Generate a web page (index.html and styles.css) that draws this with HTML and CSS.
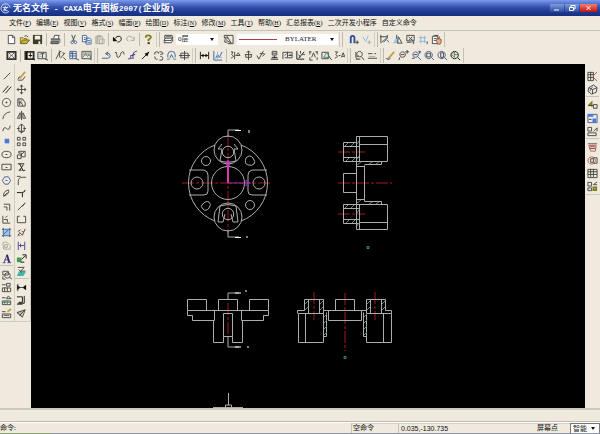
FILE: index.html
```
<!DOCTYPE html>
<html lang="zh-CN">
<head>
<meta charset="utf-8">
<title>无名文件 - CAXA电子图板2007(企业版)</title>
<link rel="stylesheet" href="styles.css">
</head>
<body>
<header class="titlebar">
  <svg class="app-logo" viewBox="0 0 12 12"><path d="M10 9A5 5 0 1 1 11 5M3 5h6M6 3l-2 6M4 7l5 2M8 4L5 9"/></svg>
  <h1>无名文件<span> - CAXA</span>电子图板<span>2007(</span>企业版<span>)</span></h1>
  <div class="window-buttons">
    <button aria-label="最小化"><svg viewBox="0 0 14 8"><path d="M4 6h5"/></svg></button>
    <button aria-label="还原"><svg viewBox="0 0 14 8"><path d="M6 3V1.500h4V5H9M4.500 3.500h4v3h-4z"/></svg></button>
    <button class="close" aria-label="关闭"><svg viewBox="0 0 16 8"><path d="M6 2l4 4M10 2L6 6"/></svg></button>
  </div>
</header>

<nav class="menu">
  <a href="#">文件(<u>F</u>)</a><a href="#">编辑(<u>E</u>)</a><a href="#">视图(<u>V</u>)</a><a href="#">格式(<u>S</u>)</a><a href="#">幅面(<u>P</u>)</a><a href="#">绘图(<u>D</u>)</a><a href="#">标注(<u>N</u>)</a><a href="#">修改(<u>M</u>)</a><a href="#">工具(<u>T</u>)</a><a href="#">帮助(<u>H</u>)</a><a href="#">汇总报表(<u>R</u>)</a><a href="#">二次开发小程序</a><a href="#">自定义命令</a>
</nav>

<div class="toolbar">
  <button aria-label="新建"><svg viewBox="0 0 12 12"><path class="w" d="M2.500 1.500h5l2 2v7h-7z"/><path d="M7 2v2h2"/></svg></button>
  <button aria-label="打开"><svg viewBox="0 0 12 12"><path class="y" d="M1.500 10V4h3l1 1h3v2"/><path class="yf" d="M1.500 10.500L4 6.500h7.500l-3 4z"/><path d="M6 2.500q2-2 4 1"/></svg></button>
  <button aria-label="保存"><svg viewBox="0 0 12 12"><path class="of" d="M1 1h10v10H1z"/><path class="wf" d="M3 2h6v4H3zM7 8h2v3H7z"/></svg></button>
  <i class="sep"></i>
  <button aria-label="打印"><svg viewBox="0 0 12 12"><path class="w" d="M4 5l1-3.500h5L9 5"/><path class="gf" d="M1 5h9l1.500 1v3L9 11H1z"/><path d="M1 5.500h10M1 8.500h8v2H1z"/></svg></button>
  <i class="sep"></i>
  <button aria-label="剪切"><svg viewBox="0 0 12 12"><path d="M4 1l3 7M8 1L5 8"/><path class="b" d="M4.500 7.500a1.500 1.500 0 1 0 .1 0M8 7.500a1.500 1.500 0 1 0 .1 0"/></svg></button>
  <button aria-label="复制"><svg viewBox="0 0 12 12"><path class="b w" d="M1.500 1.500h4l1 1v6h-5zM5.500 4.500h4l1.500 1.500v5H5.500z"/><path class="b" d="M3 4h2M3 6h2M7 7h3M7 9h3"/></svg></button>
  <button aria-label="粘贴"><svg viewBox="0 0 12 12"><path class="t" d="M2 2.500h7v8H2zM4 1.500h3v2H4zM6 5.500h5v5H6z"/><path class="tf" d="M2 3h3v7H2z"/></svg></button>
  <i class="sep"></i>
  <button aria-label="撤销"><svg viewBox="0 0 12 12"><path class="k" d="M2 6Q7 0 10 4Q11 8 6 9"/><path class="kf" d="M1 3v5h5z"/></svg></button>
  <button aria-label="重做"><svg viewBox="0 0 12 12"><path class="t" d="M10 6Q5 0 2 4Q1 7 4 8M10 3v4H6"/></svg></button>
  <i class="sep"></i>
  <button aria-label="帮助"><svg viewBox="0 0 12 12"><path class="ok" d="M3 4Q3 1 6 1.500Q9 2 8.500 4Q8 5 6 6v2"/><path class="of" d="M5 9h2.500v2H5z"/></svg></button>
  <i class="grip"></i>
  <button aria-label="层控制"><svg viewBox="0 0 12 12"><path class="w" d="M3 6.500l-2 3h8l2-3z"/><path class="w" d="M3 4l-2 3h8l2-3z"/><path class="w" d="M2 1.500h8v3H2z"/><path d="M3 3h6"/></svg></button>
  <span class="combo layer"><select aria-label="当前层"><option>0层</option></select></span>
  <button class="pen" aria-label="颜色"><svg viewBox="0 0 12 12"><path d="M1 1.500h10v9H5M1 3l5 2 3 5-5-3zM6 5L4 2M2 6v3h3"/></svg></button>
  <span class="combo linetype"><select aria-label="线型"><option>BYLAYER</option><option selected>BYLATER</option></select></span>
  <i class="grip wide"></i>
  <button aria-label="捕捉"><svg viewBox="0 0 12 12"><path class="b thick" d="M3 10V4Q3 2 5 2T7 4v6"/><path d="M8 9h4M10 7v4"/></svg></button>
  <button aria-label="捕捉点"><svg viewBox="0 0 12 12"><path class="l" d="M2 3l3 5 3-6"/><path class="t" d="M7 9h4M9 7v4"/></svg></button>
  <i class="grip short"></i>
  <button aria-label="导航"><svg viewBox="0 0 12 12"><path d="M2 1v9M1 3h8M9 1v4M3 9l6-5"/><path class="b" d="M5 9l3-3 3 3"/></svg></button>
  <button aria-label="三视图"><svg viewBox="0 0 12 12"><path class="lf" d="M6 2L1 10h6z"/><path d="M7 3l4 7H6zM5 1v4"/></svg></button>
  <button aria-label="查询"><svg viewBox="0 0 12 12"><path d="M2 1.500h8v6H2zM4 3l4 4M8 3L4 7M2 9h5M9 8v3"/><path class="b" d="M7 5l3 5"/></svg></button>
  <button aria-label="栅格"><svg viewBox="0 0 12 12"><path class="l" d="M1 4h8M1 8h8M3 2v8M7 2v8"/><path d="M10 8v3"/></svg></button>
  <button aria-label="平移"><svg viewBox="0 0 12 12"><path class="w" d="M1.500 2.500h6v8h-6zM3 1.500h5M3 5h3M3 7h3"/><path class="hand" d="M6 7l1-3 1 2 1-3 1 3h1v3l-1 2H7z"/></svg></button>
  <i class="end"></i>
</div>

<div class="toolbar">
  <button aria-label="图幅"><svg viewBox="0 0 12 12"><path class="thick" d="M1.500 2h9v8h-9z"/><path d="M3 3l2 2M9 3L7 5M3 9l2-2M9 9L7 7M5 6h2"/></svg></button>
  <i class="sep"></i>
  <button aria-label="图框"><svg viewBox="0 0 12 12"><path class="thick" d="M1.500 2h9v8h-9z"/><path class="kf" d="M2 2h2v8H2z"/><path class="k" d="M7 3v5M5 6h4M9 9l3 2"/></svg></button>
  <button aria-label="标题栏"><svg viewBox="0 0 12 12"><path d="M1 2.500h9v7H1z"/><path class="l" d="M2 5h3M2 7h3"/><path d="M4 4h4M6 4v5M9 10l3 1"/></svg></button>
  <i class="sep"></i>
  <button aria-label="零件序号"><svg viewBox="0 0 12 12"><path d="M1 10L5 2v6M4 1l3 1M6 9l4-5M8 3l3 1M9 8l3 3"/></svg></button>
  <button aria-label="明细表"><svg viewBox="0 0 12 12"><path class="b" d="M2 1.500h7v8H2zM2 4h7M2 6.500h7M5 2v7"/><path d="M8 9l4 2M3 3h1"/></svg></button>
  <button aria-label="背景"><svg viewBox="0 0 12 12"><path d="M1 1.500h10v8H1z"/><path class="tf" d="M2 2h8v4H2z"/><path class="g" d="M2 8l3-4 2 3 2-2 2 4M8 9l4 2"/></svg></button>
  <i class="grip"></i>
  <button aria-label="轴线"><svg viewBox="0 0 12 12"><path class="b" d="M1 9h6q3 0 3-3T6 4"/><path d="M8 2L5 4l3 2"/></svg></button>
  <button aria-label="波浪线"><svg viewBox="0 0 12 12"><path d="M1 3q2-2 2 2t2 3 2-3 2-3 2 3"/></svg></button>
  <button aria-label="双折线"><svg viewBox="0 0 12 12"><path class="v" d="M1 10l3-1V6h3V3l4-2M4 9h3L6 5h3"/></svg></button>
  <button aria-label="箭头"><svg viewBox="0 0 12 12"><path class="k" d="M2 10l8-8"/><path class="kf" d="M10 2L5 4l3 3z"/></svg></button>
  <button aria-label="齿轮"><svg viewBox="0 0 12 12"><path d="M2 5q-1-3 2-3t2 2M7 2q3-1 4 2L8 5M2 7q0 4 3 3M8 7q4 0 2 4H7"/></svg></button>
  <button aria-label="圆弧拟合"><svg viewBox="0 0 12 12"><path class="b" d="M2 8V5q0-3.500 4-3.500T10 5v3M4 9l2-4 2 4"/><path class="g" d="M1 10h3M8 10h3"/></svg></button>
  <button aria-label="孔轴"><svg viewBox="0 0 12 12"><path d="M2 3.500h8v5H2zM6 1v10M0 6h12"/></svg></button>
  <i class="grip"></i>
  <button aria-label="尺寸标注"><svg viewBox="0 0 12 12"><path class="k" d="M1.500 2v8M10.500 2v8M2 6h8"/><path class="kf" d="M2 6l3-2v4zM10 6L7 4v4z"/></svg></button>
  <button aria-label="坐标标注"><svg viewBox="0 0 12 12"><path class="b" d="M2 1v10h9M4 9l2-4 2 3 3-6"/><path class="l" d="M3 8h8M6 2v8"/></svg></button>
  <i class="sep"></i>
  <button aria-label="倒角标注"><svg viewBox="0 0 12 12"><path d="M1 2h2L2 5l2 2-3 2M5 2v8M6 6h5L9 3 7 6"/></svg></button>
  <button aria-label="引出说明"><svg viewBox="0 0 12 12"><path d="M6 1v10M2 5h8M4 3l2-2 2 2M3 5v3h6V5"/></svg></button>
  <button aria-label="粗糙度"><svg viewBox="0 0 12 12"><path d="M1 6l2 4 5-9M4 4h5M7 7l3-3"/></svg></button>
  <button aria-label="基准代号"><svg viewBox="0 0 12 12"><path d="M3.500 1.500h5v4h-5zM6 6v3M4 3.500h4"/><path class="k" d="M2 10h8M3 8h6"/></svg></button>
  <button aria-label="形位公差"><svg viewBox="0 0 12 12"><path d="M1 10V2.500h10v6H3M6 2v6M3 6l2-2M8 4l2 2M7 6h4"/></svg></button>
  <button aria-label="焊接符号"><svg viewBox="0 0 12 12"><path class="k" d="M2 1v9h8M4 9l6-7"/><path d="M4 5l2 3M8 5h3M6 1v3"/></svg></button>
  <button aria-label="剖切符号"><svg viewBox="0 0 12 12"><path d="M1 2h3M8 2h3M2 2v3M10 2v3M4 8l2-5 2 5M2 8v3h3M10 8v3"/></svg></button>
  <button aria-label="局部放大"><svg viewBox="0 0 12 12"><path d="M1 2.500h7v7H1zM9 8l3 3"/><path class="g" d="M3 8l3-5 4 5z"/></svg></button>
  <button aria-label="尺寸驱动"><svg viewBox="0 0 12 12"><path d="M1 2h3L2 5l2 2-3 2M5 6h2M8 8l2-5 2 5M9 7h2"/></svg></button>
  <i class="grip"></i>
  <button aria-label="格式刷"><svg viewBox="0 0 12 12"><path class="r" d="M2 9l3 1"/><path d="M6 1.500a3 3 0 1 0 .1 0M2 2v6l3-2M8 7l3 4M2 10h5"/></svg></button>
  <button aria-label="线宽"><svg viewBox="0 0 12 12"><path d="M1 4h5M8 4h2M1 9h10"/><path class="t" d="M2 7h7"/></svg></button>
  <i class="grip short"></i>
  <button aria-label="重画"><svg viewBox="0 0 12 12"><path class="yk" d="M3 10l7-8"/><path class="b" d="M1 9q3 3 5 0"/></svg></button>
  <button aria-label="动态缩放"><svg viewBox="0 0 12 12"><path d="M5 2a3 3 0 1 0 .1 0M2 8l-1 3M8 2h4M10 0v4M3 5h4"/></svg></button>
  <button aria-label="放大"><svg viewBox="0 0 12 12"><path class="b" d="M5 2a3 3 0 1 0 .1 0M7 7l4 4"/><path d="M8 2h3M9.500 1v3M3 5h4M1 9h3"/></svg></button>
  <button aria-label="窗口缩放"><svg viewBox="0 0 12 12"><path class="b" d="M5 1.500a4 4 0 1 0 .1 0M8 8l3 3"/><path d="M3 3.500h4v4H3z"/></svg></button>
  <button aria-label="显示全部"><svg viewBox="0 0 12 12"><path class="b" d="M5 1.500a4 4 0 1 0 .1 0M8 8l3 3"/><path d="M4 3h3v5H4z"/></svg></button>
  <button aria-label="显示回溯"><svg viewBox="0 0 12 12"><path class="k" d="M5 1.500a4 4 0 1 0 .1 0M8 8l3 3"/><path class="g" d="M2 5l3-3v6zM5 5h4"/></svg></button>
  <i class="end"></i>
</div>

<div class="workspace">
  <div class="rail">
    <button aria-label="直线"><svg viewBox="0 0 12 12"><path d="M3 9l7-7"/></svg></button>
    <button aria-label="平行线"><svg viewBox="0 0 12 12"><path class="k" d="M2 9l6-7M5 10l6-7"/></svg></button>
    <button aria-label="圆"><svg viewBox="0 0 12 12"><path d="M6 1.500a4.500 4.500 0 1 0 .1 0M5 6h2M6 5v2"/></svg></button>
    <button aria-label="圆弧"><svg viewBox="0 0 12 12"><path d="M2 10Q3 3 10 2"/></svg></button>
    <button aria-label="样条"><svg viewBox="0 0 12 12"><path d="M2 9q1-6 4-3t4-3"/></svg></button>
    <button aria-label="点"><svg viewBox="0 0 12 12"><path class="bf" d="M4 3h5v5H4z"/></svg></button>
    <button aria-label="椭圆"><svg viewBox="0 0 12 12"><ellipse cx="6" cy="6" rx="5" ry="3.500"/><path d="M5 6h2"/></svg></button>
    <button aria-label="矩形"><svg viewBox="0 0 12 12"><path d="M1 2.500h10v6H1zM5 6h2"/></svg></button>
    <button aria-label="正多边形"><svg viewBox="0 0 12 12"><path class="b" d="M4 2h4l2.500 4L8 10H4L1.500 6z"/><path d="M5 6h2"/></svg></button>
    <button aria-label="中心线"><svg viewBox="0 0 12 12"><path d="M3 9q-1-5 5-7 2 4-5 7zM3 9l4-4"/></svg></button>
    <button aria-label="等距线"><svg viewBox="0 0 12 12"><path d="M3 3.500h6.500v7M3 6.500h3.500v4"/></svg></button>
    <button aria-label="公式曲线"><svg viewBox="0 0 12 12"><path d="M2 2v8h8M3 6h4v3M5 4l2-2"/></svg></button>
    <button aria-label="剖面线"><svg viewBox="0 0 12 12"><path class="lf" d="M3 3h6v6H3z"/><path class="b" d="M1 2.500h10M1 9.500h10M2.500 1v10M9.500 1v10M3 8l5-5"/></svg></button>
    <button aria-label="填充"><svg viewBox="0 0 12 12"><path class="t" d="M2 3q3-2 5 0l3 3v4H3zM4 5h3v3H4z"/></svg></button>
    <button aria-label="文字"><svg viewBox="0 0 12 12"><path class="v" d="M2 10.500h3M7 10.500h4M3.500 10L6.500 2M4 7.500h4"/><path class="vk" d="M6.500 2L9 10"/></svg></button>
    <i class="rule"></i>
    <button aria-label="块生成"><svg viewBox="0 0 12 12"><path d="M2 2.500h6v4H2zM7 4a3 3 0 1 0 .1 0M2 8v3h3M9 9l3 2"/></svg></button>
    <button aria-label="图符"><svg viewBox="0 0 12 12"><path d="M1 3h4M6 1.500h4v3H6zM1.500 6.500h9v4h-9zM4 6v4M7 6v4"/></svg></button>
    <button aria-label="定义图符"><svg viewBox="0 0 12 12"><path d="M1 3h4M6 4l2-3 3 3zM1.500 6.500h9v4h-9z"/><path class="g" d="M4 6v4M7 6v4M2 8h8"/></svg></button>
    <button aria-label="图库"><svg viewBox="0 0 12 12"><path d="M1 4h4M1.500 6.500h9v4h-9zM3 8h6"/><path class="yk" d="M7 4l4-3"/></svg></button>
  </div>
  <div class="rail modify">
    <button aria-label="删除"><svg viewBox="0 0 12 12"><path class="yk" d="M4 8l6-7"/><path d="M2 10h5l3-4M2 9l2-3"/></svg></button>
    <button aria-label="平移"><svg viewBox="0 0 12 12"><path d="M6 1v10M1 6h10M4.500 3L6 1l1.500 2M4.500 9L6 11l1.500-2M3 4.500L1 6l2 1.500M9 4.500L11 6 9 7.500"/></svg></button>
    <button aria-label="平移复制"><svg viewBox="0 0 12 12"><path class="tf" d="M2 2h5v5H2z"/><path d="M2 10V2h5l3 4v4zM4 9V5l3 3v2"/></svg></button>
    <button aria-label="镜像"><svg viewBox="0 0 12 12"><path d="M6 1v10M4.500 3v6h-3zM7.500 3v6h3z"/></svg></button>
    <button aria-label="旋转"><svg viewBox="0 0 12 12"><path d="M6 1v10M3 4l3-3 3 3v5H3zM1 6h3M8 6h3M4 9l2 2 2-2"/></svg></button>
    <button aria-label="阵列"><svg viewBox="0 0 12 12"><path d="M1.500 1.500h3v3h-3zM7.500 1.500h3v3h-3zM1.500 7.500h3v3h-3zM7.500 7.500h3v3h-3z"/></svg></button>
    <button aria-label="缩放"><svg viewBox="0 0 12 12"><path d="M3 2.500h7v6H6v-4H3zM1.500 6.500h4v4h-4zM6 6l3-3"/></svg></button>
    <button aria-label="裁剪"><svg viewBox="0 0 12 12"><path class="k" d="M2 2h7M4 2l4 8M8 3L4 9M3 9h3M8 9h2"/></svg></button>
    <button aria-label="过渡"><svg viewBox="0 0 12 12"><path d="M2.500 11V7q0-4.500 4.500-4.500h4M1 1.500h4"/></svg></button>
    <button aria-label="打断"><svg viewBox="0 0 12 12"><path class="k" d="M1 5h5q4 0 4-3M7 5v5"/></svg></button>
    <button aria-label="拉伸"><svg viewBox="0 0 12 12"><path d="M2 10l8-8M7 6l3-4"/></svg></button>
    <button aria-label="齐边"><svg viewBox="0 0 12 12"><path d="M4 2.500H1.500v7h9v-7H8"/></svg></button>
    <button aria-label="改变颜色"><svg viewBox="0 0 12 12"><path d="M2 10l2-4 3 3 3-7M2 5l3-2"/><path class="r" d="M6 5h3M3 8l2 2"/></svg></button>
    <button aria-label="标注编辑"><svg viewBox="0 0 12 12"><path class="v" d="M2.500 2v9M9.500 2v9M3 6h6M5 4v4"/></svg></button>
    <button aria-label="移动层"><svg viewBox="0 0 12 12"><path class="gf2" d="M1 5h5v5H1z"/><path class="k" d="M6 7l4-4M7 2h4v4M5 10h4"/></svg></button>
    <button aria-label="格式"><svg viewBox="0 0 12 12"><path class="cf" d="M3 6h8l-3 5H1z"/><path d="M2 1.500h7l-4 4h5M3 4l3 3"/></svg></button>
    <i class="rule"></i>
    <button aria-label="设备图"><svg viewBox="0 0 12 12"><path class="kf" d="M1 3l4 3-4 3zM11 3L7 6l4 3z"/><path d="M4 6h4M2 2v8"/></svg></button>
    <button aria-label="明细"><svg viewBox="0 0 12 12"><path class="k" d="M1 2h6v6H3M9 1v8H2M1 10h6"/></svg></button>
    <button aria-label="刷新"><svg viewBox="0 0 12 12"><path class="tf" d="M1 5l7-3-2 8z"/><path d="M1 5l9-3-3 8zM10 2L4 8"/></svg></button>
  </div>

  <main class="drawing">
    <svg viewBox="31 64 554 344" preserveAspectRatio="xMinYMin meet" role="img" aria-label="零件图">
      <g class="axis">
        <path d="M182 183h90M228 134v100M338 152h27M338 183h54M338 214h27M228 303v32M314 292v28M345 293v58M375 292v28"/>
      </g>
      <g class="line">
        <!-- flange, front view -->
        <path d="M241 145A40.500 40.500 0 0 1 241 221M215 145A40.500 40.500 0 0 0 215 221"/>
        <circle cx="228" cy="150" r="14"/><circle cx="228" cy="217" r="14"/>
        <circle cx="228" cy="183" r="16.500"/>
        <circle cx="197" cy="183" r="6"/><circle cx="259" cy="183" r="6"/>
        <circle cx="228" cy="152" r="5.700"/><circle cx="228" cy="214" r="5.700"/>
        <circle cx="206" cy="161" r="4.500"/><circle cx="250" cy="205" r="4.500"/>
        <path d="M246 158q4-4 7 0t1 6-6 1-2-7zM202 205q4-5 7-3t0 6-6 1-1-4z"/>
        <path d="M189 170h15q4 1 4 5v16q0 4-4 4h-15M267 170h-15q-4 1-4 5v16q0 4 4 4h15"/>
        <path d="M222 144l-4 5h4l-2 12q8 3 16 0l-2-12h4l-4-5M220 206q8-3 16 0l2 16h-5l-2-8M220 206l-2 16h5l2-8"/>
        <path d="M228 137v-7h11M228 230v7h11M228 300v-7h11M228 336v11h11"/>
        <!-- side section -->
        <path d="M356.500 136.500h31v25h-31zM359.500 136.500v25M359.500 144.500h28M343.500 142.500h13M343.500 142.500v19h16M343.500 146.500h16M343.500 157.500h16"/>
        <path d="M356.500 161.500v43M364.500 165.500v36M356.500 166.500h8M364.500 164.500h17v-3M356.500 199.500h8M364.500 201.500h17v3M343.500 173.500h13v19h-13z"/>
        <path d="M356.500 204.500h31v25h-31zM359.500 204.500v25M359.500 222.500h28M343.500 204.500h13M343.500 204.500v19h16M343.500 208.500h16M343.500 219.500h16"/>
        <!-- flange, bottom view -->
        <path d="M187.500 310.500v-11h19v11M218.500 310.500v-11h19v11M249.500 310.500v-11h19v11M187.500 310.500h81v5h-5v5h-22v-10M187.500 310.500v5h5v5h22v-10"/>
        <path d="M213.500 320.500v22h10v-29h9v29h10v-22M223.500 336.500h9"/>
        <!-- lengthwise section -->
        <path d="M298.500 313.500h25v29h-25zM305.500 313.500v29M297.500 313.500v-3h7v-11h19v14M308.500 299.500v14M319.500 299.500v14M323.500 310.500h43M328.500 310.500v10h33v-10M335.500 310.500v-11h19v11M323.500 336.500h3v-24M366.500 336.500h-3v-24"/>
        <path d="M366.500 313.500h25v29h-25zM383.500 313.500v29M366.500 313.500v-14h19v11h6v3M370.500 299.500v14M381.500 299.500v14"/>
        <path d="M228.500 393v12M225.500 408v-3h6v3M213 407.500h30"/>
      </g>
      <path class="hatch" d="M345 146l3-3M351 146l3-3M346 161l3-3M352 161l3-3M357 144l2-3M357 159l2-3M357 165l4-3M345 208l3-3M351 208l3-3M346 223l3-3M352 223l3-3M357 203l4-3M357 213l2-3M357 226l2-3M369 164l3-2M376 164l3-2M369 204l3-2M376 204l3-2M305 304l3-3M305 310l3-3M320 304l3-3M320 310l3-3M324 317l3-3M324 323l3-3M324 329l3-3M324 335l3-3M367 304l3-3M367 310l3-3M382 304l3-3M382 310l3-3M364 317l3-3M364 323l3-3M364 329l3-3M364 335l3-3"/>
      <path class="bold" d="M235 130.500h6M235 237.500h6M235 293h6M235 347h6M249 130v3M247 236v2M246 290v2M248 346v2"/>
      <path class="ucs" d="M228 183v-20"/>
      <path class="ucs-head" d="M226 165l2-5 2 5zM225 162h6"/>
      <path class="ucs-x" d="M228 183h22M246 180l4 3-4 3z"/>
      <path class="mark" d="M367 246.500h2v2h-2zM344 356.500h2v2h-2z"/>
    </svg>
  </main>

  <div class="rail right">
    <button aria-label="图纸"><svg viewBox="0 0 12 12"><path d="M1 1.500h6v9H1zM1 4h6M1 7h6M4 1v9"/><path class="r" d="M7 5l4-4M7 7l4 4"/></svg></button>
    <button aria-label="实体"><svg viewBox="0 0 12 12"><path d="M2 4l5-3 4 3-1 5-5 2-4-3zM2 4l4 2 5-2M6 6v5"/><path class="b" d="M3 8l3-5"/></svg></button>
    <i class="rule"></i>
    <button aria-label="关联"><svg viewBox="0 0 12 12"><path class="ok" d="M2 6l3-3v4"/><path d="M1 6h6M7 5h4v4H7z"/></svg></button>
    <button aria-label="窗口"><svg viewBox="0 0 12 12"><path class="b" d="M1 1.500h10v9H1z"/><path class="bf" d="M1 1h6v3H1zM6 6h4v4H6z"/><path d="M2 7h3"/></svg></button>
    <button aria-label="视图"><svg viewBox="0 0 12 12"><path d="M1 1.500h4v4H1zM1 7.500h9v3H1zM7 6l4-4v4"/></svg></button>
    <i class="rule"></i>
    <button aria-label="表格"><svg viewBox="0 0 12 12"><path class="r" d="M2 4h8l-1 6H4zM3 5h6"/><path d="M1 2h10M3 7h6"/></svg></button>
    <button aria-label="部件"><svg viewBox="0 0 12 12"><path class="r" d="M5 2a4 4 0 1 0 .1 0"/><path d="M4 4h3v4H4zM7 3h4v6H7"/></svg></button>
    <button aria-label="明细"><svg viewBox="0 0 12 12"><path d="M1 1.500h10v9H1zM1 4h10M1 7h10M4 1v9M7 1v9"/></svg></button>
    <button aria-label="参数"><svg viewBox="0 0 12 12"><path d="M1 1.500h4v4H1zM7 4l4-3M7 4h4M1 7.500h4v3H1z"/><path class="ok" d="M7 7h3v3H7z"/></svg></button>
  </div>
</div>

<div class="message-strip"></div>
<footer class="status">
  <label for="command">命令:</label><input id="command" type="text">
  <output class="cell state">空命令</output>
  <output class="cell coords">0.035,-130.735</output>
  <span class="cell snap-type">屏幕点</span>
  <span class="combo snap"><select aria-label="捕捉方式"><option>智能</option></select></span>
</footer>
</body>
</html>
```
FILE: styles.css
```
* { box-sizing: border-box; }

body {
  margin: 0;
  height: 100vh;
  display: flex;
  flex-direction: column;
  overflow: hidden;
  background: #efeadd;
  color: #111;
  font: 7px/10px "Liberation Serif", "Noto Sans CJK SC", serif;
}

button {
  display: block;
  padding: 0;
  border: 0;
  background: none;
}

svg { display: block; }

/* Title bar */
.titlebar {
  flex: none;
  display: flex;
  align-items: center;
  height: 16px;
  background: linear-gradient(#7c9bee 0, #5c7ad0 3px, #3553ae 7px, #213c94 11px, #152e80 16px);
  color: #fff;
}
.app-logo {
  width: 11px;
  height: 11px;
  fill: none;
  stroke: #dce8ff;
}
h1 {
  flex: 1;
  margin: 0 0 0 2px;
  font: bold 9px/14px "Noto Sans CJK SC", sans-serif;
  white-space: pre;
}
h1 span { font: bold 8px/14px "Liberation Mono", monospace; }
.window-buttons {
  display: flex;
  gap: 1px;
  padding-right: 3px;
}
.window-buttons button {
  width: 14px;
  height: 8px;
  border-radius: 1px;
  background: linear-gradient(#7f9de0, #2d4a9e);
}
.window-buttons .close {
  width: 17px;
  background: linear-gradient(#f08070, #c81010);
}
.window-buttons svg {
  width: 100%;
  height: 8px;
  fill: none;
  stroke: #fff;
}

/* Menu */
.menu {
  flex: none;
  display: flex;
  gap: 5px;
  height: 15px;
  padding: 2px 9px 0;
  border-bottom: 1px solid #c5c1b4;
  white-space: nowrap;
}
.menu a {
  color: #111;
  text-decoration: none;
}
.menu u { font-size: 6px; }

/* Toolbars */
.toolbar {
  flex: none;
  display: flex;
  align-items: center;
  height: 16px;
  padding-left: 5px;
}
.toolbar + .toolbar { height: 17px; }
.toolbar button {
  flex: none;
  width: 13px;
}
button svg {
  width: 11px;
  height: 11px;
  margin: 0 auto;
  fill: none;
  stroke: #444;
}
.sep {
  width: 5px;
  height: 13px;
  background: linear-gradient(#bdb9ac, #bdb9ac) 2px 0 / 1px 100% no-repeat;
}
.grip {
  width: 7px;
  height: 15px;
  background:
    linear-gradient(#d2cec1, #d2cec1) 1px 0 / 1px 100% no-repeat,
    linear-gradient(#bdb9ac, #bdb9ac) 4px 0 / 1px 100% no-repeat;
}
.grip.wide { width: 9px; }
.grip.short { width: 5px; }
.end {
  width: 2px;
  height: 15px;
  border-right: 1px solid #c5c1b4;
}

/* Icon colours */
button .w { fill: #fff; }
button .b { stroke: #3d5e9c; }
button .r { stroke: #bd5545; }
button .g { stroke: #4a8272; }
button .t { stroke: #aaa69c; }
button .y { stroke: #7d7420; fill: #e8d860; }
button .v { stroke: #44408c; }
button .l { stroke: #8db2df; }
button .k { stroke: #111; }
button .thick { stroke: #333; stroke-width: 2; }
button .b.thick { stroke: #2c4d9c; }
button .vk { stroke: #2c286c; stroke-width: 2; }
button .yk { stroke: #c5a04c; stroke-width: 2; }
button .ok { stroke: #807c20; stroke-width: 2; }
button .yf { stroke: #6c6418; fill: #c5b238; }
button .of { stroke: none; fill: #3b3c20; }
button .wf { stroke: none; fill: #eee; }
button .gf { stroke: none; fill: #999; }
button .tf { stroke: none; fill: #bcb8b0; }
button .kf { stroke: none; fill: #111; }
button .bf { stroke: none; fill: #4a78dc; }
button .lf { stroke: none; fill: #9cc6e8; }
button .gf2 { stroke: none; fill: #3e9c4c; }
button .cf { stroke: none; fill: #43b5a8; }
button .hand { stroke: #8c5a3c; fill: #e8b088; }

/* Drop-downs */
.combo {
  position: relative;
  flex: none;
  background: #fff;
}
.combo select {
  display: block;
  width: 100%;
  height: 11px;
  padding: 0 2px;
  border: 0;
  border-radius: 0;
  background: none;
  color: #222;
  appearance: none;
  font: inherit;
}
.combo::after {
  content: "";
  position: absolute;
  right: 4px;
  top: 4px;
  border: 2px solid transparent;
  border-top: 3px solid #111;
  border-bottom: 0;
  pointer-events: none;
}
.layer {
  width: 42px;
  margin: 0 2px 0 1px;
}
.pen { margin: 0 2px; }
.linetype { width: 101px; }
.linetype select {
  padding-left: 48px;
  background: linear-gradient(#b03c3c, #b03c3c) 2px 5px / 38px 1px no-repeat;
}

/* Workspace */
.workspace {
  flex: 1;
  display: flex;
  min-height: 0;
}
.rail {
  flex: none;
  display: flex;
  flex-direction: column;
  align-self: flex-start;
  width: 15px;
  padding: 6px 1px 1px 0;
  border: 1px solid #d0ccbf;
  border-width: 0 1px 1px 0;
}
.rail.modify { width: 16px; }
.rail.right {
  width: 15px;
  padding-left: 1px;
  border-width: 0 0 1px;
}
.rail button {
  width: 13px;
  height: 13px;
}
.rule {
  height: 3px;
  border-top: 1px solid #c5c1b4;
}
.drawing {
  flex: 1;
  min-width: 0;
  background: #000;
}
.drawing svg {
  width: 100%;
  height: 100%;
  fill: none;
}
.line { stroke: #adadad; stroke-width: 1; }
.axis { stroke: #a01820; stroke-dasharray: 12 2 3 2; }
.hatch { stroke: #4f8c86; }
.bold { stroke: #fff; }
.ucs { stroke: #d838a8; stroke-width: 2; }
.ucs-head { stroke: #b838b8; }
.ucs-x { stroke: #8c2ca8; }
.mark { stroke: #3e8c6c; }

/* Status area */
.message-strip {
  flex: none;
  height: 14px;
  border-top: 2px solid #cdc9be;
  border-bottom: 1px solid #bdbab0;
}
.status {
  flex: none;
  display: flex;
  height: 12px;
  padding-bottom: 1px;
  border-top: 1px solid #fff;
  background: linear-gradient(90deg, #86a86c 51px, #8b98b0 51px) 0 100% / 100% 1px no-repeat;
}
.status input {
  flex: 1;
  min-width: 0;
  padding: 0 2px;
  border: 0;
  background: none;
  font: inherit;
}
.cell {
  flex: none;
  padding-left: 1px;
  border-left: 1px solid #c5c1b4;
  border-top: 1px solid #d5d1c4;
  line-height: 9px;
}
.state { width: 47px; }
.coords {
  width: 138px;
  padding-left: 2px;
  font-family: "Liberation Sans", sans-serif;
}
.snap-type {
  width: 34px;
  border-left: 0;
}
.snap {
  width: 30px;
  border: 1px solid #777;
  border-bottom: 0;
}
.snap select { height: 9px; }
.snap::after { top: 3px; }
```
